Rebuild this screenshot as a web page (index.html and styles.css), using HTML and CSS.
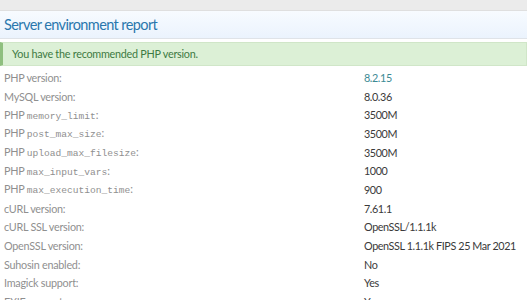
FILE: index.html
```html
<!DOCTYPE html>
<html lang="en">

<head>
    <meta charset="UTF-8" />
    <title>Server environment report</title>
    <link rel="stylesheet" href="styles.css">
</head>

<body>
    <div class="topBar"></div>
    <div class="block">
        <h2 class="blockHeader">Server environment report</h2>
        <div class="message">You have the recommended PHP version.</div>
        <dl class="pairs">
            <div class="pair"><dt>PHP version:</dt><dd class="good">8.2.15</dd></div>
            <div class="pair"><dt>MySQL version:</dt><dd>8.0.36</dd></div>
            <div class="pair"><dt>PHP <code>memory_limit</code>:</dt><dd>3500M</dd></div>
            <div class="pair"><dt>PHP <code>post_max_size</code>:</dt><dd>3500M</dd></div>
            <div class="pair"><dt>PHP <code>upload_max_filesize</code>:</dt><dd>3500M</dd></div>
            <div class="pair"><dt>PHP <code>max_input_vars</code>:</dt><dd>1000</dd></div>
            <div class="pair"><dt>PHP <code>max_execution_time</code>:</dt><dd>900</dd></div>
            <div class="pair"><dt>cURL version:</dt><dd>7.61.1</dd></div>
            <div class="pair"><dt>cURL SSL version:</dt><dd>OpenSSL/1.1.1k</dd></div>
            <div class="pair"><dt>OpenSSL version:</dt><dd>OpenSSL 1.1.1k FIPS 25 Mar 2021</dd></div>
            <div class="pair"><dt>Suhosin enabled:</dt><dd>No</dd></div>
            <div class="pair"><dt>Imagick support:</dt><dd>Yes</dd></div>
            <div class="pair"><dt>EXIF support:</dt><dd>Yes</dd></div>
        </dl>
    </div>
</body>

</html>
```

FILE: styles.css
```css
body {
    margin: 0;
    font-family: Lato, "Noto Sans", sans-serif;
    font-size: 10.8px;
    letter-spacing: -0.25px;
    color: #3a3a3a;
    background-color: #fff;
}

.topBar {
    height: 10px;
    background-color: #ebebeb;
    border-bottom: 1px solid #dfdfdf;
}

.blockHeader {
    margin: 0;
    padding: 0 4px;
    height: 27px;
    line-height: 27px;
    font-size: 14.5px;
    letter-spacing: -0.6px;
    font-weight: normal;
    color: #2a77ad;
    background: linear-gradient(to bottom, #f7fbff, #ebf3fd);
    border-bottom: 1px solid #dfe3e8;
}

.message {
    margin: 3px 0 0;
    padding: 0 9px;
    height: 22px;
    line-height: 22px;
    color: #3d7a42;
    background-color: #dcf0d6;
    border: 1px solid #d0e6c8;
    border-left: 3px solid #8fbf7f;
}

.pairs {
    margin: 2px 0 0;
}

.pair {
    display: grid;
    grid-template-columns: 364px 1fr;
    height: 18.7px;
    align-items: center;
    white-space: nowrap;
}

dt {
    padding-left: 4px;
    color: #8f8f8f;
}

dd {
    margin: 0;
    color: #3a3a3a;
    letter-spacing: -0.4px;
}

dd.good {
    color: #3d8a94;
}

code {
    font-family: "Liberation Mono", monospace;
    font-size: 9.6px;
    letter-spacing: 0;
}
```
